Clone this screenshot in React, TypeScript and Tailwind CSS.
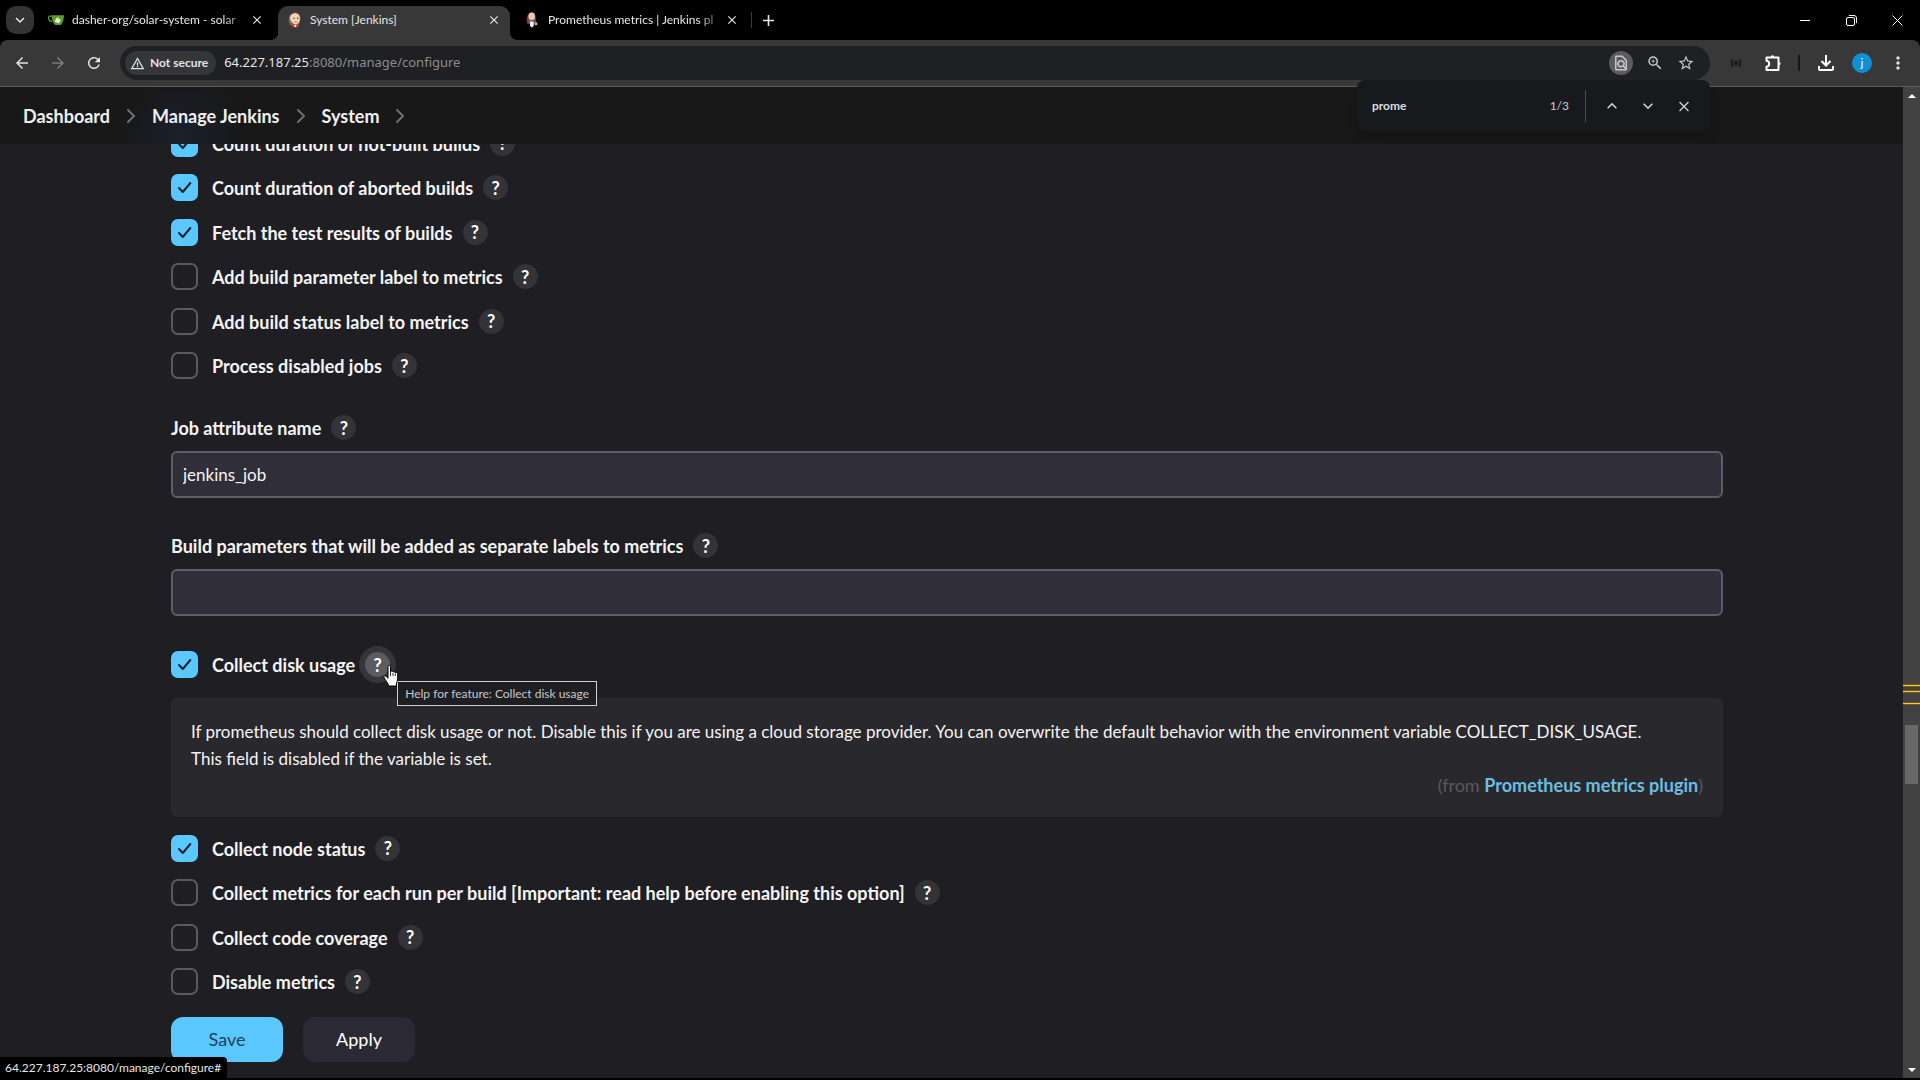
import React, { useState } from 'react';
import {
  MdArrowBack,
  MdArrowForward,
  MdClose,
  MdKeyboardArrowDown,
  MdKeyboardArrowUp,
  MdMoreVert,
  MdOutlineFindInPage,
  MdRefresh,
  MdStarBorder,
  MdWarningAmber,
  MdZoomIn,
} from 'react-icons/md';

type Option = {
  id: string;
  label: string;
  checked: boolean;
};

const buildOptions: Option[] = [
  { id: 'not-built', label: 'Count duration of not-built builds', checked: true },
  { id: 'aborted', label: 'Count duration of aborted builds', checked: true },
  { id: 'test-results', label: 'Fetch the test results of builds', checked: true },
  { id: 'param-label', label: 'Add build parameter label to metrics', checked: false },
  { id: 'status-label', label: 'Add build status label to metrics', checked: false },
  { id: 'disabled-jobs', label: 'Process disabled jobs', checked: false },
];

const collectOptions: Option[] = [
  { id: 'node-status', label: 'Collect node status', checked: true },
  {
    id: 'per-build',
    label: 'Collect metrics for each run per build [Important: read help before enabling this option]',
    checked: false,
  },
  { id: 'coverage', label: 'Collect code coverage', checked: false },
  { id: 'disable', label: 'Disable metrics', checked: false },
];

function GiteaIcon() {
  return (
    <svg className="w-4 h-4 shrink-0" viewBox="0 0 16 16" aria-hidden>
      <path d="M4 4.2H1.6C.6 4.2.3 5.2.6 6.6c.4 1.700 1.600 2.800 3.600 3" fill="none" stroke="#5e9a2e" strokeWidth="1.2" />
      <path d="M3.600 3.300h12c.3 0 .4.200.4.500-.1 3.200-.8 5.800-2.300 8.200-.4.600-.8.900-1.500.9H8c-.8 0-1.400-.3-1.900-1C4.500 9.700 3.600 7 3.600 3.300z" fill="#5e9a2e" />
      <path d="M8.600 5.800l3.800 1.600c.4.200.5.500.3.900L11.200 11c-.2.400-.5.500-.9.300L7.200 9.900c-.4-.2-.5-.5-.3-.9z" fill="#e4f0da" />
      <path d="M10.200 5l-.9 3.800" stroke="#e4f0da" strokeWidth=".8" />
    </svg>
  );
}

function JenkinsIcon() {
  return (
    <svg className="w-4 h-4 shrink-0" viewBox="0 0 16 16" aria-hidden>
      <path d="M3 13c-1.300-2-1.600-4.500-1.200-7C2.300 2.500 4.900.5 8.200.5c3.400 0 5.300 2.200 5.300 5.800 0 3.200-1 6-2.600 8z" fill="#8a5a4c" />
      <path d="M3 5C4 2 6.500 1 8.700 1.200c2.500.2 4.200 2.300 4.200 5.300 0 2.800-1.500 5.700-3.900 5.900C6 12.700 2.700 8.800 3 5z" fill="#f0d6b7" />
      <path d="M4.500 12.600L8 13.500l3-1.400.8 3.400H5z" fill="#b8332e" />
      <path d="M6.500 13.200l2 2.300 1.300-2.500z" fill="#fff" />
      <circle cx="7" cy="6.200" r=".7" fill="#3b2a24" />
      <circle cx="10.600" cy="6.200" r=".7" fill="#3b2a24" />
      <path d="M7.300 9.600c1 .7 2 .6 2.900-.1" fill="none" stroke="#a8513f" strokeWidth=".7" />
    </svg>
  );
}

function JenkinsPluginIcon() {
  return (
    <svg className="w-4 h-4 shrink-0" viewBox="0 0 16 16" aria-hidden>
      <path d="M3 11.500C2.200 9 2.400 6 3.500 3.500 4.500 1.300 6 .4 7.900.4c2.400 0 3.700 2 3.900 4.900.1 2.700 1 5 .5 7.200z" fill="#8d2f36" />
      <ellipse cx="7.700" cy="4.400" rx="3.300" ry="3.900" fill="#e2c9b9" />
      <path d="M4.300 7c2 1.200 4.600 1.200 6.600 0l.8 4.500H4z" fill="#6e5560" />
      <path d="M6 9.500h3.500l.3 4.300-1.900 2-1.900-2z" fill="#eef1f6" />
      <circle cx="12" cy="11.800" r="1.600" fill="#a9adb6" />
    </svg>
  );
}

function RestoreIcon() {
  return (
    <svg className="w-[11px] h-[11px]" viewBox="0 0 11 11" fill="none" stroke="currentColor" aria-hidden>
      <rect x=".5" y="2.500" width="8" height="8" rx="1.500" />
      <path d="M2.800.5h5.200A2.500 2.500 0 0 1 10.500 3v5.200" />
    </svg>
  );
}

function BroadcastIcon() {
  return (
    <svg className="w-3 h-3 text-[#151515]" viewBox="0 0 12 12" fill="none" stroke="currentColor" strokeWidth="1.500" aria-hidden>
      <path d="M2.800 2.200c-1.600 2.300-1.600 5.300 0 7.600M9.200 2.200c1.600 2.300 1.600 5.300 0 7.600" />
      <circle cx="6" cy="6" r="1.500" />
    </svg>
  );
}

function PuzzleIcon() {
  return (
    <svg className="w-4 h-4" viewBox="0 0 16 16" fill="none" stroke="currentColor" strokeWidth="2" strokeLinejoin="round" aria-hidden>
      <path d="M1.500 2.500h12V15h-12v-3.200c1.700-.2 2.700-1.400 2.700-3s-1-2.800-2.700-3z" />
      <path d="M5.700 2a1.800 1.800 0 0 1 3.600 0zM14 6.900a1.600 1.600 0 0 1 0 3.200z" fill="currentColor" stroke="none" />
    </svg>
  );
}

function DownloadIcon() {
  return (
    <svg className="w-4 h-4" viewBox="0 0 16 16" fill="none" stroke="currentColor" strokeWidth="2" aria-hidden>
      <path d="M8 0v10M3.500 6L8 10.500 12.500 6" />
      <path d="M1 11v3c0 .6.400 1 1 1h12c.6 0 1-.4 1-1v-3" />
    </svg>
  );
}

function HandCursor() {
  return (
    <svg className="absolute left-[18px] top-[13px] z-20 w-4 h-[22px]" viewBox="0 0 16 22" aria-hidden>
      <path
        d="M5 1.500c0-1.300 2.500-1.300 2.500 0v6l.2-.9c.4-.9 2.200-.7 2.300.5.500-.8 2.200-.5 2.300.7.700-.7 2.400-.3 2.400 1.200v5c0 2-1.300 3.500-1.300 5.200v1.800H5.300v-1.500C4.500 17.700 2.500 15.200 1 12.400c-.6-1.200.8-2.200 1.900-1.200L5 13.200z"
        fill="#fff"
        stroke="#000"
        strokeWidth="1"
      />
      <path d="M7.500 7.500v3.500M10 8v3M12.300 8.500v2.500" stroke="#000" strokeWidth=".8" />
    </svg>
  );
}

function Chevron() {
  return (
    <svg className="w-2 h-[14px] shrink-0" viewBox="0 0 8 14" fill="none" stroke="#6f6f74" strokeWidth="2" aria-hidden>
      <path d="M1 1l6 6-6 6" strokeLinecap="round" strokeLinejoin="round" />
    </svg>
  );
}

function HelpButton({ feature, hovered = false }: { feature: string; hovered?: boolean }) {
  return (
    <button
      type="button"
      aria-label={`Help for feature: ${feature}`}
      className={
        hovered
          ? 'flex items-center justify-center w-[25px] h-[25px] shrink-0 rounded-full bg-[#5c5b60] ring-6 ring-[#36353a] text-white text-lg leading-none font-bold'
          : 'flex items-center justify-center w-[25px] h-[25px] shrink-0 rounded-full bg-[#343338] text-white text-lg leading-none font-bold'
      }
    >
      ?
    </button>
  );
}

function CheckRow({ option, children }: { option: Option; children?: React.ReactNode }) {
  const [checked, setChecked] = useState(option.checked);
  return (
    <div className="flex items-center">
      <span className="relative w-[27px] h-[27px] shrink-0">
        <input
          id={option.id}
          type="checkbox"
          checked={checked}
          onChange={(e) => setChecked(e.target.checked)}
          className="block appearance-none w-full h-full rounded-[7px] border-2 border-[#5b5a60] checked:border-[#5ac8ff] checked:bg-[#5ac8ff]"
        />
        {checked && (
          <svg
            className="absolute inset-0 w-full h-full pointer-events-none"
            viewBox="0 0 27 27"
            fill="none"
            stroke="#14222c"
            strokeWidth="2"
            strokeLinecap="round"
            strokeLinejoin="round"
            aria-hidden
          >
            <path d="M8 14l3.800 4L19.300 9" />
          </svg>
        )}
      </span>
      <label htmlFor={option.id} className="ml-[14px] mr-[10px] pt-[2px]">
        {option.label}
      </label>
      {children ?? <HelpButton feature={option.label} />}
    </div>
  );
}

function TextField({ id, label, defaultValue }: { id: string; label: string; defaultValue: string }) {
  return (
    <div>
      <div className="flex items-center gap-[10px] h-[25px]">
        <label htmlFor={id} className="pt-[2px]">
          {label}
        </label>
        <HelpButton feature={label} />
      </div>
      <input
        id={id}
        type="text"
        defaultValue={defaultValue}
        className="block mt-[11px] w-full h-[47px] rounded-md border-2 border-[#5f5e66] bg-[#302e39] px-[10px] text-[17px] font-normal text-[#f4f4f6] outline-none"
      />
    </div>
  );
}

function TabStrip() {
  return (
    <div className="flex h-10 shrink-0 bg-black text-xs text-[#e6e6e6]">
      <button type="button" aria-label="Search tabs" className="flex items-center justify-center w-7 h-7 ml-[6px] mt-[6px] rounded-[10px] bg-[#333333]">
        <MdKeyboardArrowDown className="w-[18px] h-[18px]" />
      </button>
      <div className="flex items-center w-[244px] h-7 mt-[6px] pl-[14px] pr-[14px]">
        <GiteaIcon />
        <span className="flex-1 ml-2 whitespace-nowrap mask-r-from-85%">dasher-org/solar-system - solar</span>
        <button type="button" aria-label="Close tab">
          <MdClose className="w-[14px] h-[14px]" />
        </button>
      </div>
      <div className="relative flex items-start w-[232px] h-[34px] mt-[6px] rounded-t-[10px] bg-[#383838]">
        <span className="absolute -left-2 bottom-0 w-2 h-2 bg-[radial-gradient(circle_at_0_0,#000_8px,#383838_8px)]" />
        <span className="absolute -right-2 bottom-0 w-2 h-2 bg-[radial-gradient(circle_at_100%_0,#000_8px,#383838_8px)]" />
        <div className="flex items-center w-full h-7 pl-[9px] pr-[9px]">
          <JenkinsIcon />
          <span className="flex-1 ml-[7px]">System [Jenkins]</span>
          <button type="button" aria-label="Close tab">
            <MdClose className="w-[14px] h-[14px]" />
          </button>
        </div>
      </div>
      <div className="flex items-center w-[241px] h-7 mt-[6px] pl-[14px] pr-[12px]">
        <JenkinsPluginIcon />
        <span className="flex-1 ml-2 whitespace-nowrap mask-r-from-85%">Prometheus metrics | Jenkins pl</span>
        <button type="button" aria-label="Close tab">
          <MdClose className="w-[14px] h-[14px]" />
        </button>
      </div>
      <div className="flex items-center h-7 mt-[6px]">
        <span className="w-px h-4 bg-[#3a3a3a]" />
        <button type="button" aria-label="New tab" className="ml-[11px]">
          <svg className="w-[11px] h-[11px]" viewBox="0 0 11 11" stroke="currentColor" strokeWidth="1.600" aria-hidden>
            <path d="M5.500 0v11M0 5.500h11" />
          </svg>
        </button>
      </div>
      <div className="flex items-center ml-auto text-white">
        <button type="button" aria-label="Minimize" className="flex justify-center w-[46px]">
          <span className="w-[10px] h-px bg-white" />
        </button>
        <button type="button" aria-label="Restore" className="flex justify-center w-[46px]">
          <RestoreIcon />
        </button>
        <button type="button" aria-label="Close" className="flex justify-center w-[46px]">
          <svg className="w-[11px] h-[11px]" viewBox="0 0 11 11" stroke="currentColor" aria-hidden>
            <path d="M.5.5l10 10M10.500.5l-10 10" />
          </svg>
        </button>
      </div>
    </div>
  );
}

function Toolbar() {
  return (
    <div className="bg-black shrink-0">
      <div className="flex items-center h-[47px] rounded-t-lg bg-[#383838] border-b border-[#5c5c5c] px-3 text-[#e3e3e3]">
        <button type="button" aria-label="Back" className="mr-4">
          <MdArrowBack className="w-5 h-[18px]" />
        </button>
        <button type="button" aria-label="Forward" className="mr-4 text-[#7b7b7b]">
          <MdArrowForward className="w-5 h-[18px]" />
        </button>
        <button type="button" aria-label="Reload" className="mr-4">
          <MdRefresh className="w-5 h-[18px]" />
        </button>
        <div className="relative flex flex-1 items-center h-[34px] rounded-full bg-[#1f2023] pl-[5px] pr-[15px]">
          <button type="button" className="flex items-center gap-[5px] h-6 rounded-full bg-[#35363a] pl-[5px] pr-2 text-xs font-bold">
            <MdWarningAmber className="w-[15px] h-[15px]" />
            Not secure
          </button>
          <div className="flex-1 ml-2 font-['Noto_Sans',sans-serif] text-[13px] text-[#e6e6e6]">
            64.227.187.25<span className="text-[#8c8d90]">:8080/manage/configure</span>
          </div>
          <div className="flex items-center gap-[13px] text-[#c7c7c7]">
            <button type="button" aria-label="Find in page" className="flex items-center justify-center w-6 h-6 rounded-full bg-[#5c5c5f]">
              <MdOutlineFindInPage className="w-[18px] h-[18px]" />
            </button>
            <button type="button" aria-label="Zoom">
              <MdZoomIn className="w-[18px] h-[18px]" />
            </button>
            <button type="button" aria-label="Bookmark">
              <MdStarBorder className="w-[18px] h-[18px]" />
            </button>
          </div>

          <form className="absolute right-0 top-[34px] z-40 flex items-center w-[353px] h-[52px] rounded-lg bg-[#171a1d] pl-[15px] pr-4 shadow-lg text-xs text-[#c9ced2]">
            <input
              type="text"
              aria-label="Find"
              defaultValue="prome"
              className="flex-1 min-w-0 bg-transparent font-bold text-[#d9dee2] outline-none"
            />
            <span className="mr-4">1/3</span>
            <span className="w-px h-8 mr-4 bg-[#4b4f52]" />
            <div className="flex items-center gap-4">
              <button type="button" aria-label="Previous">
                <MdKeyboardArrowUp className="w-5 h-5" />
              </button>
              <button type="button" aria-label="Next">
                <MdKeyboardArrowDown className="w-5 h-5" />
              </button>
              <button type="button" aria-label="Close find bar">
                <MdClose className="w-5 h-[17px]" />
              </button>
            </div>
          </form>
        </div>
        <div className="flex items-center">
          <span className="flex justify-center w-5 ml-4">
            <BroadcastIcon />
          </span>
          <button type="button" aria-label="Extensions" className="ml-[19px] text-white">
            <PuzzleIcon />
          </button>
          <span className="w-[2px] h-4 ml-[17px] bg-[#161616]" />
          <button type="button" aria-label="Downloads" className="ml-[18px] text-white">
            <DownloadIcon />
          </button>
          <button type="button" aria-label="Profile" className="flex items-center justify-center w-5 h-5 ml-[18px] rounded-full bg-[#0f8fd6] text-xs text-white">
            j
          </button>
          <button type="button" aria-label="Menu" className="ml-4">
            <MdMoreVert className="w-5 h-5" />
          </button>
        </div>
      </div>
    </div>
  );
}

function Breadcrumbs() {
  return (
    <nav className="relative z-30 flex items-center h-[57px] shrink-0 pl-[23px] gap-[17px] bg-[#181819] bg-[radial-gradient(circle_at_182px_50px,#1a212c,transparent_60px)] text-lg font-bold text-[#f0f0f2]">
      <a href="#dashboard">Dashboard</a>
      <Chevron />
      <a href="#manage">Manage Jenkins</a>
      <Chevron />
      <a href="#system">System</a>
      <Chevron />
    </nav>
  );
}

function Scrollbar() {
  return (
    <div className="relative flex flex-col items-center w-[17px] shrink-0 bg-[#424242] pt-[7px] pb-[6px]" aria-hidden>
      <span className="border-x-4 border-b-4 border-x-transparent border-b-white" />
      <span className="absolute left-0 top-[597px] w-full h-[3px] border-y border-[#7a5a10] bg-[#f2c94c]" />
      <span className="absolute left-0 top-[603px] w-full h-[3px] border-y border-[#7a5a10] bg-[#f2c94c]" />
      <span className="absolute left-0 top-[615px] w-full h-[3px] border-y border-[#7a5a10] bg-[#f2c94c]" />
      <span className="absolute left-[2px] top-[638px] w-[13px] h-[59px] bg-[#686868]" />
      <span className="mt-auto border-x-4 border-t-4 border-x-transparent border-t-white" />
    </div>
  );
}

export default function App() {
  return (
    <div className="flex flex-col h-screen overflow-hidden bg-[#1f1e23] font-['Lato','Open_Sans',sans-serif]">
      <TabStrip />
      <Toolbar />
      <div className="flex flex-1 min-h-0 border-b-2 border-black">
        <div className="flex flex-col flex-1 min-w-0 overflow-hidden">
          <Breadcrumbs />
          <main className="-mt-[23px] pl-[171px] pr-[180px] text-lg leading-[27px] font-bold text-[#f4f4f6]">
            <div className="grid h-[267px] auto-rows-fr">
              {buildOptions.map((option) => (
                <CheckRow key={option.id} option={option} />
              ))}
            </div>

            <div className="flex flex-col gap-[35px] mt-[27px]">
              <TextField id="job-attribute" label="Job attribute name" defaultValue="jenkins_job" />
              <TextField
                id="build-parameters"
                label="Build parameters that will be added as separate labels to metrics"
                defaultValue=""
              />
            </div>

            <div className="mt-[34px]">
              <CheckRow option={{ id: 'disk-usage', label: 'Collect disk usage', checked: true }}>
                <div className="relative">
                  <HelpButton feature="Collect disk usage" hovered />
                  <HandCursor />
                  <div
                    role="tooltip"
                    className="absolute left-8 top-[29px] z-10 h-[25px] px-[7px] border border-[#d0d0d0] bg-[#1f1e23] text-xs leading-[23px] font-normal text-[#c8c8c8] whitespace-nowrap"
                  >
                    Help for feature: Collect disk usage
                  </div>
                </div>
              </CheckRow>
            </div>

            <div className="mt-[19px] h-[119px] rounded-md bg-[#29282d] px-5 pt-5 text-[17px] leading-[27px] font-normal">
              <p>
                If prometheus should collect disk usage or not. Disable this if you are using a cloud storage provider.
                You can overwrite the default behavior with the environment variable COLLECT_DISK_USAGE.
                <br />
                This field is disabled if the variable is set.
              </p>
              <p className="text-right text-lg leading-[27px] text-[#59585d]">
                (from{' '}
                <a href="#plugin" className="font-bold text-[#6cbde2]">
                  Prometheus metrics plugin
                </a>
                )
              </p>
            </div>

            <div className="grid h-[178px] auto-rows-fr mt-[9px]">
              {collectOptions.map((option) => (
                <CheckRow key={option.id} option={option} />
              ))}
            </div>

            <div className="flex gap-5 mt-[13px] font-normal">
              <button type="button" className="w-28 h-[45px] rounded-xl bg-[#5ac8ff] text-[#1d4258]">
                Save
              </button>
              <button type="button" className="w-28 h-[45px] rounded-xl bg-[#2b2934] text-white">
                Apply
              </button>
            </div>
          </main>
        </div>
        <Scrollbar />
      </div>
      <div className="fixed left-0 bottom-[2px] h-[21px] pl-[5px] pr-[6px] rounded-tr bg-black text-xs leading-[21px] text-[#e6e6e6]">
        64.227.187.25:8080/manage/configure#
      </div>
    </div>
  );
}
